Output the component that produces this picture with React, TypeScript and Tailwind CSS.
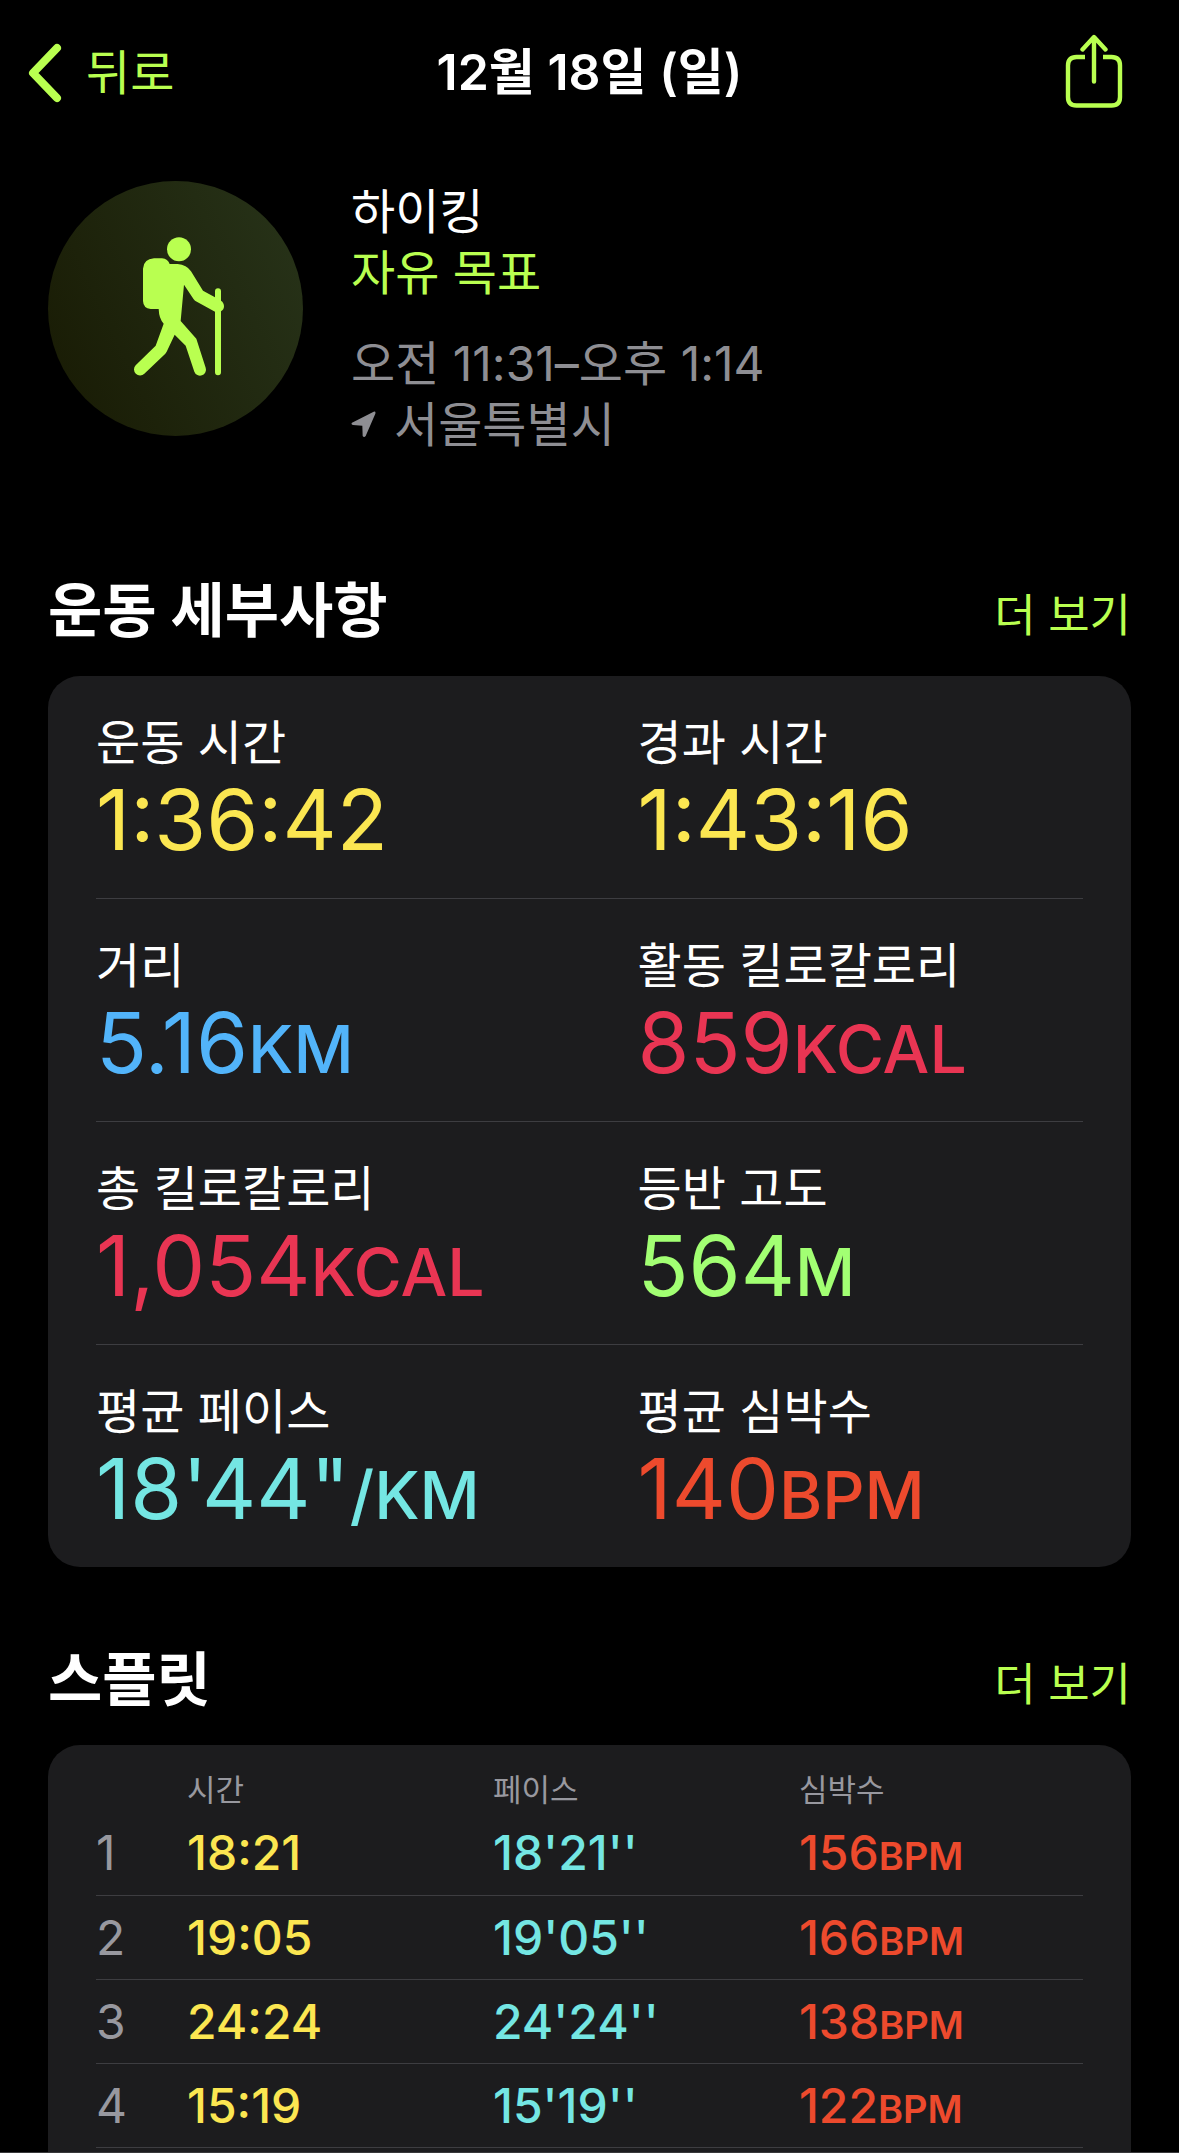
import React from "react";

type Metric = { label: string; value: string; unit?: string; color: string };
type Split = { time: string; pace: string; heartRate: number };

const metrics: Metric[] = [
  { label: "운동 시간", value: "1:36:42", color: "text-[#fbe651]" },
  { label: "경과 시간", value: "1:43:16", color: "text-[#fbe651]" },
  { label: "거리", value: "5.16", unit: "KM", color: "text-[#52b4fa]" },
  { label: "활동 킬로칼로리", value: "859", unit: "KCAL", color: "text-[#e93553]" },
  { label: "총 킬로칼로리", value: "1,054", unit: "KCAL", color: "text-[#e93553]" },
  { label: "등반 고도", value: "564", unit: "M", color: "text-[#a2ff73]" },
  { label: "평균 페이스", value: "18'44\"", unit: "/KM", color: "text-[#74e6e3]" },
  { label: "평균 심박수", value: "140", unit: "BPM", color: "text-[#ed4a2d]" },
];

const splits: Split[] = [
  { time: "18:21", pace: "18'21''", heartRate: 156 },
  { time: "19:05", pace: "19'05''", heartRate: 166 },
  { time: "24:24", pace: "24'24''", heartRate: 138 },
  { time: "15:19", pace: "15'19''", heartRate: 122 },
];

function BackIcon() {
  return (
    <svg className="h-[64px] w-[34px]" viewBox="0 -3 34 64" fill="none" stroke="currentColor" strokeWidth="8" strokeLinecap="round" strokeLinejoin="round" aria-hidden="true">
      <path d="M29 4 5 29l24 25" />
    </svg>
  );
}

function ShareIcon() {
  return (
    <svg className="h-[78px] w-[58px]" viewBox="0 0 58 78" fill="none" stroke="currentColor" strokeWidth="4.400" aria-hidden="true">
      <path d="M20 23h-8.500Q3 23 3 31.500v31.500Q3 71.500 11.500 71.500h35Q55 71.500 55 63V31.500Q55 23 46.500 23H38" />
      <path d="M29 4v43.500M17.500 15.500 29 3l11.500 12.500" strokeLinecap="round" strokeLinejoin="round" />
    </svg>
  );
}

function HikerIcon() {
  return (
    <svg className="size-full" viewBox="54 62 765 765" fill="currentColor" role="img" aria-label="하이킹">
      <circle cx="447" cy="267" r="36" />
      <path d="M339 325Q341 296 372 294H396Q414 296 419 311H443Q470 313 483 333L519 391 555 411V393a9 9 0 0 1 18 0V421Q582 427 582 438 582 448 573 453V636a9 9 0 0 1-18 0V454L495 421Q490 417 487 411L462 373 452 482 499 535 527 622a18 18 0 0 1-34 12L467 556 434 523 410 574Q408 577 406 580L343 640a18 18 0 0 1-26-25L377 556 401 490Q387 475 386 446H362Q340 444 339 422Z" />
    </svg>
  );
}

function LocationIcon() {
  return (
    <svg className="h-[27px] w-[25px]" viewBox="69 762 75 81" fill="currentColor" aria-hidden="true">
      <path d="M72 797 137 764Q144 762 142 770L113 837Q108 843 104 837L103 806 75 804Q68 802 72 797Z" />
    </svg>
  );
}

function SectionHeader({ title }: { title: string }) {
  return (
    <div className="mb-[23px] flex items-baseline justify-between">
      <h2 className="text-[59px] leading-[84px] font-bold">{title}</h2>
      <a href="#" className="text-[45px] leading-[61px] text-[#b9ff50]">
        더 보기
      </a>
    </div>
  );
}

export default function App() {
  return (
    <div className="flex h-screen flex-col overflow-hidden border-b border-[#38383a] bg-black font-['Inter','Noto_Sans_CJK_KR',sans-serif] text-white">
      <header className="grid h-[145px] shrink-0 grid-cols-[1fr_auto_1fr] items-center px-7">
        <button type="button" className="flex items-center gap-6 justify-self-start text-[48px] leading-[61px] text-[#b9ff50]">
          <BackIcon />
          뒤로
        </button>
        <h1 className="text-[50px] leading-[61px] font-semibold">12월 18일 (일)</h1>
        <button type="button" aria-label="공유" className="mr-7 justify-self-end text-[#b9ff50]">
          <ShareIcon />
        </button>
      </header>

      <main className="flex grow flex-col px-12 pt-9">
        <section className="flex items-start gap-12">
          <div className="size-[255px] shrink-0 rounded-full bg-linear-[65deg] from-[#181a03] to-[#28341a] text-[#b9ff50]">
            <HikerIcon />
          </div>
          <div className="text-[48px] leading-[61px]">
            <p>하이킹</p>
            <p className="text-[#b9ff50]">자유 목표</p>
            <p className="mt-[30px] text-[#8e8e93]">오전 11:31–오후 1:14</p>
            <p className="flex items-center gap-[18px] text-[#8e8e93]">
              <LocationIcon />
              서울특별시
            </p>
          </div>
        </section>

        <section className="mt-[114px]">
          <SectionHeader title="운동 세부사항" />
          <dl className="grid grid-cols-2 rounded-[32px] bg-[#1c1c1e] px-12">
            {metrics.map((m, i) => (
              <div
                key={m.label}
                className={`border-[#3d3d41] pt-9 pb-[31px] ${i < metrics.length - 2 ? "border-b" : ""} ${i % 2 ? "pl-12" : ""}`}
              >
                <dt className="text-[48px] leading-[61px]">{m.label}</dt>
                <dd className={`text-[84px] leading-[94px] whitespace-nowrap ${m.color}`}>
                  {m.value}
                  {m.unit && <span className="text-[66px] leading-none font-medium">{m.unit}</span>}
                </dd>
              </div>
            ))}
          </dl>
        </section>

        <section className="mt-[71px] flex grow flex-col">
          <SectionHeader title="스플릿" />
          <div className="grow rounded-t-[32px] bg-[#1c1c1e] px-12 pt-6">
            <table className="w-full table-fixed border-collapse text-left">
              <thead>
                <tr className="h-[42px] text-[31px] leading-[42px] text-[#98989f]">
                  <th className="w-[91px]" aria-label="구간" />
                  <th className="w-[31%] font-normal">시간</th>
                  <th className="w-[31%] font-normal">페이스</th>
                  <th className="font-normal">심박수</th>
                </tr>
              </thead>
              <tbody>
                {splits.map((s, i) => (
                  <tr key={s.time} className="h-[84px] border-b border-[#3d3d41] text-[48px] leading-[61px] font-medium">
                    <th className="font-normal text-[#98989f]">{i + 1}</th>
                    <td className="text-[#fbe651]">{s.time}</td>
                    <td className="text-[#74e6e3]">{s.pace}</td>
                    <td className="text-[#ed4a2d]">
                      {s.heartRate}
                      <span className="text-[38px] leading-none font-semibold">BPM</span>
                    </td>
                  </tr>
                ))}
              </tbody>
            </table>
          </div>
        </section>
      </main>
    </div>
  );
}
